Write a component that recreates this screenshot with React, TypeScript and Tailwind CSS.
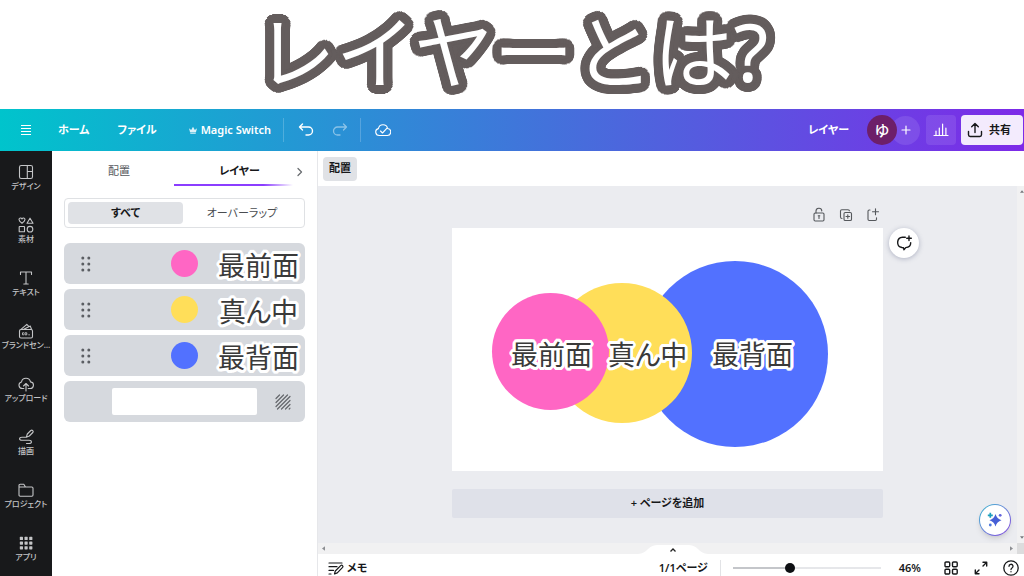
import type { CSSProperties, ReactNode } from "react";

type IconProps = { className?: string; children: ReactNode; box?: string; width?: number };

function Icon({ className = "size-4", children, box = "0 0 16 16", width = 1.2 }: IconProps) {
  return (
    <svg
      viewBox={box}
      className={className}
      fill="none"
      stroke="currentColor"
      strokeWidth={width}
      strokeLinecap="round"
      strokeLinejoin="round"
      aria-hidden="true"
    >
      {children}
    </svg>
  );
}

// Rounded text outline: rings of hard shadows at each of the given radii.
function outline(color: string, radii: number[], steps: number): CSSProperties {
  const shadows = radii.flatMap((radius) =>
    Array.from({ length: steps }, (_, i) => {
      const angle = (i / steps) * Math.PI * 2;
      return `${(Math.cos(angle) * radius).toFixed(2)}px ${(Math.sin(angle) * radius).toFixed(2)}px 0 ${color}`;
    }),
  );
  return { textShadow: shadows.join(", ") };
}

const titleOutline = outline("#645d5d", [4, 9], 36);
const labelOutline = outline("#ffffff", [1.5, 3], 16);

const navItems: { label: string; icon: ReactNode }[] = [
  {
    label: "デザイン",
    icon: (
      <>
        <rect x="1.5" y="1.5" width="13" height="13" rx="1.8" />
        <path d="M9.3 1.5v13M9.3 7.5h5.2" />
      </>
    ),
  },
  {
    label: "素材",
    icon: (
      <>
        <path d="M4 6.3C2.2 5 1 4 1 2.6C1 .8 3.3.4 4 2C4.7.4 7 .8 7 2.6C7 4 5.8 5 4 6.3Z" />
        <path d="M12 1.2 15 6.3H9Z" />
        <rect x="1.2" y="9.5" width="5.3" height="5.3" rx=".4" />
        <circle cx="12" cy="12.2" r="2.8" />
      </>
    ),
  },
  {
    label: "テキスト",
    icon: <path d="M2.5 4.5V2h11v2.5M8 2v12M5.8 14h4.4" />,
  },
  {
    label: "ブランドセン…",
    icon: (
      <>
        <rect x="1.5" y="6.5" width="13" height="8.5" rx="1.5" />
        <path d="M3 6.3 8.8 1.4l1.7 1.7M5.8 6.3l6.5-3.2 1.2 3.2" />
        <path d="M5.6 9.8H4.5v2h1.1M7.3 9.8h1.5v2H7.3ZM10.8 11.8h.6" strokeWidth=".9" />
      </>
    ),
  },
  {
    label: "アップロード",
    icon: (
      <path d="M5.8 12.5H4.3a3.3 3.3 0 0 1-.8-6.5 4.6 4.6 0 0 1 9-.1 3.3 3.3 0 0 1-.8 6.6h-1.5M8 15V7.8M5.5 10 8 7.5l2.5 2.5" />
    ),
  },
  {
    label: "描画",
    icon: (
      <path d="M8.3 8.3l1-3.3 3.5-3.5q1-.8 1.9.1t.1 1.9L11.3 7l-3 1.3Zm0 0H4C.8 8.3.8 11.3 4 11.3h7c3.2 0 3.2 3.2 0 3.2H8.5" />
    ),
  },
  {
    label: "プロジェクト",
    icon: (
      <path d="M1 13V3.5Q1 2.3 2.2 2.3h3.6L7.5 5h6.3Q15 5 15 6.2V13q0 1.2-1.2 1.2H2.2Q1 14.2 1 13ZM1 5h6.5" />
    ),
  },
  {
    label: "アプリ",
    icon: (
      <g fill="currentColor" stroke="none">
        {[1.8, 6.5, 11.2].map((y) =>
          [1.8, 6.5, 11.2].map((x) => <rect key={`${x}-${y}`} x={x} y={y} width="3.2" height="3.2" rx=".6" />),
        )}
      </g>
    ),
  },
];

const layers = [
  { name: "最前面", color: "bg-[#ff66c4]" },
  { name: "真ん中", color: "bg-[#ffde59]" },
  { name: "最背面", color: "bg-[#5271ff]" },
];

function HandLabel({ children }: { children: ReactNode }) {
  return (
    <span style={labelOutline} className="text-[27px] leading-8 whitespace-nowrap text-[#3a3a3a]">
      {children}
    </span>
  );
}

function TopBar() {
  return (
    <header className="flex h-[42px] shrink-0 items-center bg-linear-to-r/srgb from-[#00c4cc] to-[#7d2ae8] text-[11px] font-bold text-white">
      <button aria-label="メニュー" className="mr-6 ml-[18px]">
        <Icon>
          <path d="M3 3.5h10M3 6.5h10M3 9.5h10M3 12.5h10" strokeLinecap="butt" />
        </Icon>
      </button>
      <a href="#home" className="mr-7">ホーム</a>
      <button className="mr-8">ファイル</button>
      <button className="flex items-center gap-1 font-semibold">
        <svg viewBox="0 0 10 10" className="size-2" fill="currentColor" opacity=".85" aria-hidden="true">
          <path d="M0 2.8 2.7 5 5 1 7.3 5 10 2.8 8.7 7.8H1.3ZM1.6 8.4h6.800v1.2H1.6Z" />
        </svg>
        Magic Switch
      </button>
      <span className="mr-3.5 ml-3 h-6 w-px bg-white/20" />
      <button aria-label="元に戻す">
        <Icon width={1.4}>
          <path d="M4.500 2 1.500 5l3 3M1.500 5h9a4 4 0 0 1 0 8H8" />
        </Icon>
      </button>
      <button aria-label="やり直す" className="ml-[18px] opacity-45">
        <Icon width={1.3}>
          <path d="m11.500 2 3 3-3 3M14.500 5h-9a4 4 0 0 0 0 8H8" />
        </Icon>
      </button>
      <span className="mr-3.5 ml-3 h-6 w-px bg-white/20" />
      <button aria-label="保存済み">
        <Icon width={1.1}>
          <path d="M4.200 13.500a3.500 3.500 0 0 1-.8-6.900 4.700 4.700 0 0 1 9.200-.1 3.500 3.500 0 0 1-.8 7ZM5.500 9l2 2 4.300-4.600" />
        </Icon>
      </button>
      <span className="ml-auto">レイヤー</span>
      <div className="ml-[18px] flex items-center">
        <span className="z-10 grid size-[30px] place-items-center rounded-full bg-[#6d1f69] text-[15px] font-medium">ゆ</span>
        <button aria-label="メンバーを追加" className="-ml-1.5 grid size-[29px] place-items-center rounded-full bg-white/10">
          <Icon className="size-3" box="0 0 12 12" width={1.2}>
            <path d="M6 2v8M2 6h8" />
          </Icon>
        </button>
      </div>
      <button aria-label="インサイト" className="ml-1.5 grid size-[30px] place-items-center rounded bg-white/10">
        <Icon width={1.2}>
          <path d="M1 13.500h14M3 13.500V9M6.300 13.500V6M9.600 13.500V2M12.900 13.500V6" />
        </Icon>
      </button>
      <button className="mr-px ml-[5px] flex h-[30px] items-center gap-1.5 rounded bg-[#f3ebfd] pr-3 pl-1.5 text-[#17181a]">
        <Icon width={1.4}>
          <path d="M1.500 9.500v3.300Q1.500 14.500 3.200 14.500h9.600q1.700 0 1.700-1.700V9.500M8 10.500v-9M4.700 4.700 8 1.400l3.300 3.300" />
        </Icon>
        共有
      </button>
    </header>
  );
}

function SideNav() {
  return (
    <nav className="w-[52px] shrink-0 bg-[#18191b]">
      {navItems.map((item) => (
        <button
          key={item.label}
          className="flex h-[53px] w-full flex-col items-center justify-center text-[8px] leading-3 font-medium whitespace-nowrap text-[#c4c5c7]"
        >
          <Icon className="size-4" width={1.1}>{item.icon}</Icon>
          {item.label}
        </button>
      ))}
    </nav>
  );
}

function LayerPanel() {
  return (
    <aside className="w-[265px] shrink-0 bg-white px-3">
      <div role="tablist" className="flex h-[35px] text-[11px]">
        <button role="tab" aria-selected="false" className="w-[110px] pt-1.5 text-[#55585c]">配置</button>
        <button role="tab" aria-selected="true" className="relative flex-1 pt-1.5 pl-3 font-bold text-[#17181a]">
          レイヤー
          <span className="absolute inset-x-0 bottom-0 h-[2px] bg-linear-to-r from-[#8b3dff] from-75% to-transparent" />
        </button>
        <button aria-label="次へ" className="pt-1.5 text-[#6b6e72]">
          <Icon className="size-3" box="0 0 12 12" width={1.3}>
            <path d="M5 2.500 8.500 6 5 9.500" />
          </Icon>
        </button>
      </div>
      <div className="mt-3 flex h-[30px] rounded border border-[#dfe1e4] p-[3px] text-[11px]">
        <button aria-pressed="true" className="w-[115px] rounded-sm bg-[#e0e2e6] font-bold text-[#17181a]">すべて</button>
        <button aria-pressed="false" className="flex-1 text-[#4a4d51]">オーバーラップ</button>
      </div>
      <ul className="mt-[15px] flex flex-col gap-[5px]">
        {layers.map((layer) => (
          <li key={layer.name} className="grid h-[41px] grid-cols-[1fr_auto_1fr] items-center rounded-md bg-[#d6d9de]">
            <button aria-label={`${layer.name}を移動`} className="ml-3.5 w-4">
              <svg viewBox="0 0 16 16" className="size-4" fill="#5b5e63" aria-hidden="true">
                {[2, 8, 14].map((y) => (
                  <g key={y}>
                    <circle cx="4.8" cy={y} r="1.5" />
                    <circle cx="10.8" cy={y} r="1.5" />
                  </g>
                ))}
              </svg>
            </button>
            <span className={`size-[27px] rounded-full ${layer.color}`} />
            <span className="grid justify-center pt-1 pl-3.5">
              <HandLabel>{layer.name}</HandLabel>
            </span>
          </li>
        ))}
        <li className="flex h-[41px] items-center justify-end gap-[18px] rounded-md bg-[#d6d9de] pr-3.5">
          <span className="h-[27px] w-[145px] rounded-xs bg-white" />
          <svg viewBox="0 0 16 16" className="size-4" stroke="#63666b" strokeWidth="1.2" strokeLinecap="round" aria-hidden="true">
            <path d="M1 4.500 4.500 1M1 8.500 8.500 1M1 12.500 12.500 1M2.500 15 15 2.500M6.500 15 15 6.500M10.500 15 15 10.500M14.200 15l.8-.8" />
          </svg>
        </li>
      </ul>
    </aside>
  );
}

function Artboard() {
  return (
    <div className="w-[431px]">
      <div className="flex h-[42px] items-center justify-end gap-[11px] pt-4 pr-0.5 text-[#55585c]">
        <button aria-label="ロック">
          <Icon width={1.1}>
            <rect x="3" y="6" width="10" height="8" rx="1.200" />
            <path d="M5 6V4.300a2.900 2.900 0 0 1 5.800-.4M8 9v2.500M7.200 8.800h1.600" />
          </Icon>
        </button>
        <button aria-label="ページを複製">
          <Icon width={1.1}>
            <rect x="6" y="5.500" width="7.500" height="8" rx="1.300" />
            <path d="M4 11.500Q2.500 11.500 2.500 10V4Q2.500 2.700 3.800 2.700H10q1.400 0 1.400 1M9.800 7.700v3.600M8 9.500h3.600" />
          </Icon>
        </button>
        <button aria-label="ページを追加">
          <Icon width={1.1}>
            <path d="M5 3H4.200Q3 3 3 4.200v8.100Q3 13.500 4.200 13.500h6.100q1.200 0 1.200-1.200V10.800M10.500 1.800v6M7.500 4.800h6" />
          </Icon>
        </button>
      </div>
      <div className="relative h-[243px] bg-white">
        <div className="absolute top-[33px] left-[190px] size-[186px] rounded-full bg-[#5271ff]" />
        <div className="absolute top-[55px] left-[100px] size-[140px] rounded-full bg-[#ffde59]" />
        <div className="absolute top-[65px] left-10 size-[117px] rounded-full bg-[#ff66c4]" />
        <div className="absolute top-[111px] left-[59px]"><HandLabel>最前面</HandLabel></div>
        <div className="absolute top-[111px] left-[156px]"><HandLabel>真ん中</HandLabel></div>
        <div className="absolute top-[111px] left-[260px]"><HandLabel>最背面</HandLabel></div>
        <button
          aria-label="コメントを追加"
          className="absolute top-0 -right-9 grid size-[30px] place-items-center rounded-full bg-white text-[#17181a] shadow-[0_1px_5px_rgba(60,70,110,0.35)]"
        >
          <Icon width={1.4}>
            <path d="M9.300 2.200H6.500a5.200 5.200 0 0 0-.6 10.300l1.500.2.600 2 1.700-2.100c3.200-.2 5-2.200 5-4.800M13 1v4.600M10.700 3.300h4.600" />
          </Icon>
        </button>
      </div>
      <button className="mt-[18px] h-[29px] w-full rounded-xs bg-[#dfe1e9] text-[11px] font-semibold text-[#17181a]">
        + ページを追加
      </button>
    </div>
  );
}

function Workspace() {
  return (
    <main className="flex min-w-0 flex-1 flex-col border-l border-[#e6e7ea]">
      <div className="flex h-[35px] shrink-0 items-center bg-white px-[5px]">
        <button className="h-6 rounded-sm bg-[#e0e2e6] px-1.5 text-[11px] font-bold text-[#17181a]">配置</button>
      </div>
      <div className="flex flex-1">
        <div className="relative flex flex-1 justify-center bg-[#ebecf0]">
          <Artboard />
          <button
            aria-label="マジック作成"
            className="absolute right-1.5 bottom-[7px] grid size-8 place-items-center rounded-full bg-linear-to-br from-[#20b8cf] to-[#8040dd] p-px shadow-md"
          >
            <span className="grid size-full place-items-center rounded-full bg-white">
              <svg viewBox="0 0 16 16" className="size-4" aria-hidden="true">
                <path d="M8.500 2Q9.800 6.800 14.500 8.300 9.800 9.600 8.500 14.500 7.200 9.600 2.500 8.300 7.200 6.800 8.500 2Z" fill="#465fd6" />
                <path d="M3.300.8v5M.8 3.300h5" stroke="#1d9fbd" strokeWidth="1.700" />
                <circle cx="13.200" cy="3.300" r="1.400" fill="#6465dc" />
                <circle cx="3.300" cy="13" r="1.400" fill="#4f79dc" />
              </svg>
            </span>
          </button>
        </div>
        <div className="flex w-[7px] flex-col items-end justify-between bg-[#f1f1f2] py-1 text-[#77797d]">
          <svg viewBox="0 0 6 4" className="h-[3px] w-1" fill="currentColor" aria-hidden="true"><path d="M0 4 3 0l3 4Z" /></svg>
          <svg viewBox="0 0 6 4" className="h-[3px] w-1" fill="currentColor" aria-hidden="true"><path d="M0 0l3 4 3-4Z" /></svg>
        </div>
      </div>
      <div className="flex h-[11px] shrink-0 bg-[#f1f1f2]">
        <div className="relative flex flex-1 items-center justify-between px-1 text-[#8c8e92]">
          <svg viewBox="0 0 4 6" className="h-[5px] w-[3px]" fill="currentColor" aria-hidden="true"><path d="M4 0v6L0 3Z" /></svg>
          <button aria-label="ページ一覧を表示" className="absolute bottom-0 left-1/2 ml-[-30px]">
            <svg viewBox="0 0 70 9" className="h-[9px] w-[70px]" fill="none" aria-hidden="true">
              <path d="M0 9C9 9 10 0 19 0H51C60 0 61 9 70 9Z" fill="#fff" />
              <path d="M32.500 6.500 35 4l2.500 2.500" stroke="#222" strokeWidth="1.300" />
            </svg>
          </button>
          <svg viewBox="0 0 4 6" className="h-[5px] w-[3px]" fill="currentColor" aria-hidden="true"><path d="M0 0l4 3-4 3Z" /></svg>
        </div>
        <div className="w-[7px] bg-[#dcdcdd]" />
      </div>
      <footer className="flex h-[22px] shrink-0 items-center bg-white pt-1.5 pr-[5px] pl-2.5 text-[11px] leading-4 font-semibold text-[#17181a]">
        <button className="flex items-center gap-[3px] font-bold">
          <Icon width={1.2}>
            <path d="M1 3h13M1 6.700h8M1 10.400h4.500M1 14h2M6.500 14l.8-3 5.400-5.400q1-.8 1.800 0t.1 1.800L9.300 12.900Z" />
          </Icon>
          メモ
        </button>
        <button className="ml-auto">1/1ページ</button>
        <span className="mx-3 h-4 w-px bg-[#e2e3e6]" />
        <input
          type="range"
          aria-label="ズーム"
          defaultValue={38}
          className="h-3 w-[148px] appearance-none bg-transparent [&::-webkit-slider-runnable-track]:h-[2px] [&::-webkit-slider-runnable-track]:bg-linear-to-r [&::-webkit-slider-runnable-track]:from-[#c4c6ca] [&::-webkit-slider-runnable-track]:from-38% [&::-webkit-slider-runnable-track]:to-[#e6e7ea] [&::-webkit-slider-runnable-track]:to-38% [&::-webkit-slider-thumb]:-mt-1 [&::-webkit-slider-thumb]:size-2.5 [&::-webkit-slider-thumb]:appearance-none [&::-webkit-slider-thumb]:rounded-full [&::-webkit-slider-thumb]:bg-[#0e1013]"
        />
        <button className="ml-[18px]">46%</button>
        <button aria-label="グリッド表示" className="ml-[22px]">
          <Icon width={1.4}>
            <rect x="2" y="2" width="4.700" height="4.700" rx="1" />
            <rect x="9.500" y="2" width="4.700" height="4.700" rx="1" />
            <rect x="2" y="9.300" width="4.700" height="4.700" rx="1" />
            <rect x="9.500" y="9.300" width="4.700" height="4.700" rx="1" />
          </Icon>
        </button>
        <button aria-label="全画面表示" className="ml-3.5">
          <Icon width={1.4}>
            <path d="M10 6 13.500 2.500M10 2.300h3.700V6M6 10 2.500 13.500M2.300 10v3.700H6" />
          </Icon>
        </button>
        <button aria-label="ヘルプ" className="ml-3.5">
          <Icon width={1.3}>
            <circle cx="8" cy="8" r="7.200" />
            <path d="M6 6.300a2 2 0 1 1 3 1.700q-1 .6-1 1.500M8 11.700v.1" />
          </Icon>
        </button>
      </footer>
    </main>
  );
}

export default function App() {
  return (
    <div
      lang="ja"
      className="flex min-h-screen flex-col bg-white font-['Noto_Sans','Noto_Sans_CJK_JP',sans-serif] [font-feature-settings:'palt']"
    >
      <h1
        style={titleOutline}
        className="flex h-[109px] shrink-0 items-center justify-center pb-2 text-[80px] leading-none font-normal whitespace-nowrap text-white [font-feature-settings:normal]"
      >
        レイヤーとは?
      </h1>
      <TopBar />
      <div className="flex flex-1">
        <SideNav />
        <LayerPanel />
        <Workspace />
      </div>
    </div>
  );
}
